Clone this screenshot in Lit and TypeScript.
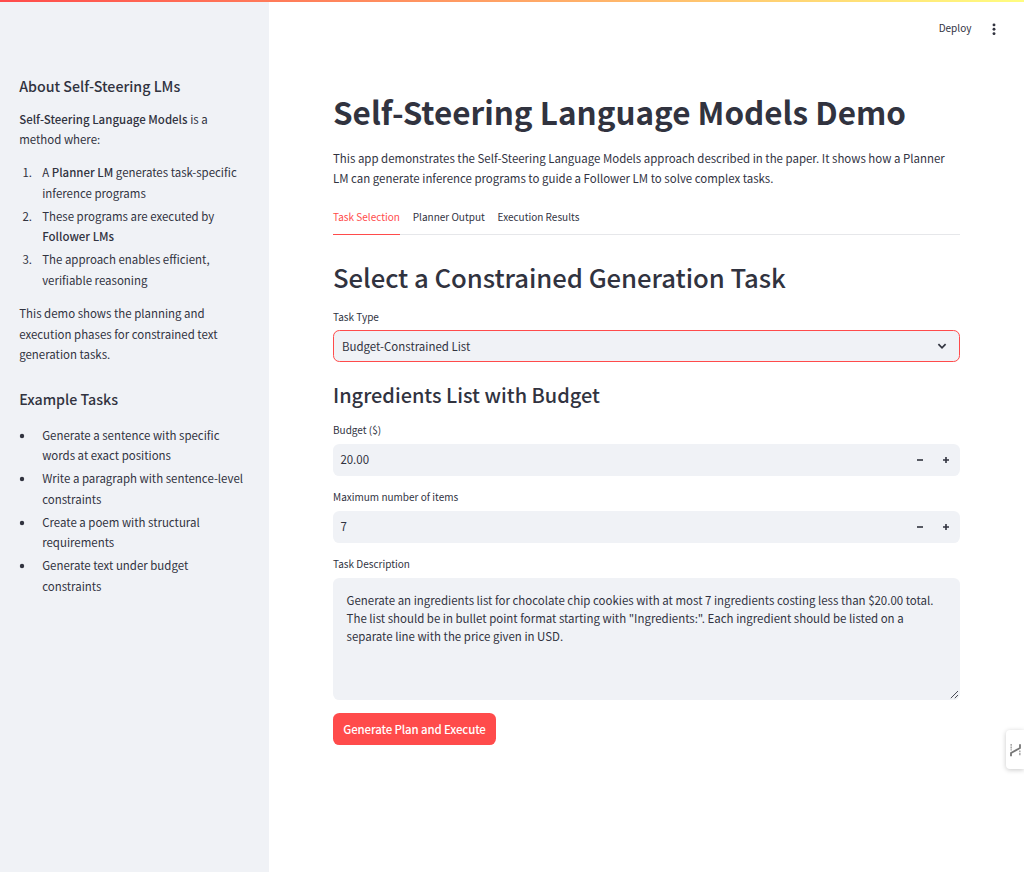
import { LitElement, html, css } from "lit";
import { customElement } from "lit/decorators.js";

@customElement("app-root")
export class AppRoot extends LitElement {
  static styles = css`
    :host {
      display: block;
      position: relative;
      width: 100%;
      height: 872px;
      overflow: hidden;
      background: #fff;
      color: #31333f;
      font-family: "Noto Sans CJK SC", "Source Sans Pro", sans-serif;
      font-size: 11.46px;
      line-height: 20.48px;
    }
    * { box-sizing: border-box; }
    h1, h2, h3, p, ol, ul { margin: 0; padding: 0; }
    strong { font-weight: 500; letter-spacing: 0.02px; }
    .decoration {
      position: absolute;
      inset: 0 0 auto 0;
      height: 2px;
      background: linear-gradient(90deg, #ff4b4b, #fffd80);
      z-index: 2;
    }
    .layout { display: flex; height: 100%; }

    .sidebar {
      flex: 0 0 269px;
      background: #f0f2f6;
      padding: 76px 19.2px 0;
    }
    .sidebar h3 {
      font-size: 14.23px;
      font-weight: 500;
      line-height: 19.2px;
      margin-bottom: 13.6px;
    }
    .sidebar p { margin-bottom: 12.35px; }
    .sidebar .second { margin: 24.4px 0 16.2px; }
    .list { list-style: none; margin-bottom: 13.3px; }
    .list li { display: flex; margin-bottom: 2.56px; }
    .num { flex: 0 0 23px; padding-left: 3.2px; }
    .dot { flex: 0 0 23px; padding-top: 8px; }
    .dot svg { display: block; }

    .page { flex: 1; display: flex; flex-direction: column; }
    .toolbar {
      height: 57px;
      display: flex;
      align-items: center;
      justify-content: flex-end;
      gap: 20.6px;
      padding-right: 28px;
      font-size: 10.03px;
    }
    .toolbar svg { display: block; }
    .content { width: 691px; padding: 34px 0 0 64px; }
    h1 {
      font-size: 31.44px;
      font-weight: 700;
      line-height: 42px;
      white-space: nowrap;
      margin-bottom: 15px;
    }
    .tabs {
      display: flex;
      gap: 12.8px;
      height: 32px;
      margin-top: 14px;
      font-size: 10.03px;
      line-height: 27px;
      background: linear-gradient(#e6e7ea, #e6e7ea) bottom / 100% 1px no-repeat;
    }
    .tab { height: 32px; }
    .tab.active { color: #ff4b4b; border-bottom: 1px solid #ff4b4b; }
    h2 {
      font-size: 25.7px;
      font-weight: 500;
      line-height: 36px;
      letter-spacing: -0.05px;
      margin-top: 24px;
      margin-bottom: 14px;
    }
    .content h3 {
      font-size: 19.95px;
      font-weight: 500;
      line-height: 28px;
      margin: 19px 0 13px;
    }
    .label {
      font-size: 10.03px;
      line-height: 16px;
      height: 16px;
    }
    .field {
      display: flex;
      align-items: center;
      height: 32px;
      border-radius: 6.4px;
      background: #f0f2f6;
      padding-left: 7.4px;
    }
    .select {
      border: 1px solid #ff4b4b;
      justify-content: space-between;
      margin-top: 5px;
      padding: 0 11px 0 8px;
    }
    .number { margin: 6px 0 13px; }
    .value { flex: 1; line-height: 20px; padding-bottom: 2px; }
    .step {
      width: 26px;
      height: 32px;
      display: flex;
      align-items: center;
      justify-content: center;
    }
    .step.plus { margin-right: 1px; }
    .area {
      display: flex;
      align-items: flex-end;
      height: 122px;
      margin: 6px 0 13px;
      border-radius: 6.4px;
      background: #f0f2f6;
      padding: 14px 0 0 13.6px;
    }
    .area .body {
      flex: 1;
      align-self: flex-start;
      line-height: 17.92px;
      white-space: nowrap;
    }
    .grip { flex: none; margin: 0 1px 1px 0; }
    .run {
      display: inline-flex;
      align-items: center;
      justify-content: center;
      width: 163px;
      height: 32px;
      border-radius: 6.4px;
      background: #ff4b4b;
      color: #fff;
      font-weight: 500;
      letter-spacing: -0.12px;
    }
    .edge {
      position: absolute;
      right: 0;
      top: 730px;
      width: 18px;
      height: 39px;
      border-radius: 4px 0 0 4px;
      background: #fff;
      box-shadow: 0 1px 5px rgba(0, 0, 0, 0.22);
      display: flex;
      align-items: center;
      padding-left: 3px;
    }
  `;

  private tasks = [
    ["Generate a sentence with specific", "words at exact positions"],
    ["Write a paragraph with sentence-level", "constraints"],
    ["Create a poem with structural", "requirements"],
    ["Generate text under budget", "constraints"],
  ];

  private numberField(label: string, value: string) {
    return html`
      <div class="label">${label}</div>
      <div class="field number">
        <span class="value">${value}</span>
        <span class="step"><svg width="8" height="8" viewBox="0 0 8 8"><path d="M1 4h6" stroke="#31333f" stroke-opacity=".8" stroke-width="2"/></svg></span>
        <span class="step plus"><svg width="8" height="8" viewBox="0 0 8 8"><path d="M1 4h6M4 1v6" stroke="#31333f" stroke-width="1.6"/></svg></span>
      </div>`;
  }

  render() {
    return html`
      <div class="decoration"></div>
      <div class="layout">
        <aside class="sidebar">
          <h3>About Self-Steering LMs</h3>
          <p><strong>Self-Steering Language Models</strong> is a<br />method where:</p>
          <ol class="list">
            <li><span class="num">1.</span><span>A <strong>Planner LM</strong> generates task-specific<br />inference programs</span></li>
            <li><span class="num">2.</span><span>These programs are executed by<br /><strong>Follower LMs</strong></span></li>
            <li><span class="num">3.</span><span>The approach enables efficient,<br />verifiable reasoning</span></li>
          </ol>
          <p>This demo shows the planning and<br />execution phases for constrained text<br />generation tasks.</p>
          <h3 class="second">Example Tasks</h3>
          <ul class="list">
            ${this.tasks.map(([a, b]) => html`<li><span class="dot"><svg width="6" height="6" viewBox="0 0 6 6"><circle cx="3" cy="3" r="2.2" fill="#31333f"/></svg></span><span>${a}<br />${b}</span></li>`)}
          </ul>
        </aside>
        <main class="page">
          <div class="toolbar">
            <span>Deploy</span>
            <svg width="4" height="12" viewBox="0 0 4 12" fill="#31333f"><circle cx="2" cy="1.9" r="1.45"/><circle cx="2" cy="6.3" r="1.45"/><circle cx="2" cy="10.6" r="1.45"/></svg>
          </div>
          <div class="content">
            <h1>Self-Steering Language Models Demo</h1>
            <p>This app demonstrates the Self-Steering Language Models approach described in the paper. It shows how a Planner<br />LM can generate inference programs to guide a Follower LM to solve complex tasks.</p>
            <div class="tabs">
              <span class="tab active">Task Selection</span>
              <span class="tab">Planner Output</span>
              <span class="tab">Execution Results</span>
            </div>
            <h2>Select a Constrained Generation Task</h2>
            <div class="label">Task Type</div>
            <div class="field select">
              <span>Budget-Constrained List</span>
              <svg width="12" height="12" viewBox="0 0 12 12"><path d="M2.4 4.2 6 7.8l3.6-3.6" fill="none" stroke="#31333f" stroke-width="1.7"/></svg>
            </div>
            <h3>Ingredients List with Budget</h3>
            ${this.numberField("Budget ($)", "20.00")}
            ${this.numberField("Maximum number of items", "7")}
            <div class="label">Task Description</div>
            <div class="area">
              <div class="body">Generate an ingredients list for chocolate chip cookies with at most 7 ingredients costing less than $20.00 total.<br />The list should be in bullet point format starting with "Ingredients:". Each ingredient should be listed on a<br />separate line with the price given in USD.</div>
              <svg class="grip" width="9" height="9" viewBox="0 0 9 9"><path d="M.8 8.2 8 1M4.8 8.2 8 5" fill="none" stroke="#4a4b55" stroke-width="1"/></svg>
            </div>
            <div class="run">Generate Plan and Execute</div>
          </div>
        </main>
      </div>
      <div class="edge">
        <svg width="13" height="14" viewBox="0 0 13 14" fill="none" stroke="#777">
          <path d="M2 13.2V10L11 5V1.2" stroke-width="1.8"/>
          <path d="M2.2 1v6.5M10.8 7.5V13" stroke="#aaa" stroke-width="1.6" stroke-dasharray="1.8 .8"/>
        </svg>
      </div>`;
  }
}
